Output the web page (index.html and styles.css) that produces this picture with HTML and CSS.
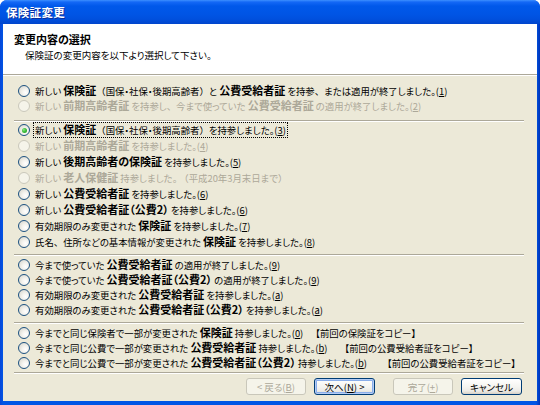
FILE: index.html
```html
<!DOCTYPE html>
<html lang="ja">
<head>
<meta charset="utf-8">
<title>保険証変更</title>
<link rel="stylesheet" href="styles.css">
</head>
<body>
<div class="window">
  <div class="titlebar"><span class="title">保険証変更</span></div>
  <div class="frame">
    <div class="header">
      <div class="h-title">変更内容の選択</div>
      <div class="h-sub">保険証の変更内容を以下より選択して下さい。</div>
    </div>
    <div class="content">
      <div class="group g1">
        <div class="row"><span class="radio"></span><span class="txt">新しい <b>保険証</b><span class="fw">（</span>国保・社保・後期高齢者<span class="fw">）</span>と <b>公費受給者証</b> を持参<span class="fw">、</span>または適用が終了しました。(<u>1</u>)</span></div>
        <div class="row dis"><span class="radio"></span><span class="txt">新しい <b>前期高齢者証</b> を持参し<span class="fw">、</span>今まで使っていた <b>公費受給者証</b> の適用が終了しました。(<u>2</u>)</span></div>
      </div>
      <div class="sep s1"></div>
      <div class="group g2">
        <div class="row"><span class="radio on"></span><span class="txt focus">新しい <b>保険証</b><span class="fw">（</span>国保・社保・後期高齢者<span class="fw">）</span>を持参しました。(<u>3</u>)</span></div>
        <div class="row dis"><span class="radio"></span><span class="txt">新しい <b>前期高齢者証</b> を持参しました。(<u>4</u>)</span></div>
        <div class="row"><span class="radio"></span><span class="txt">新しい <b>後期高齢者の保険証</b> を持参しました。(<u>5</u>)</span></div>
        <div class="row dis"><span class="radio"></span><span class="txt">新しい <b>老人保健証</b> 持参しました。 <span class="fw">（</span>平成20年3月末日まで<span class="fw">）</span></span></div>
        <div class="row"><span class="radio"></span><span class="txt">新しい <b>公費受給者証</b> を持参しました。(<u>6</u>)</span></div>
        <div class="row"><span class="radio"></span><span class="txt">新しい <b>公費受給者証（公費2）</b> を持参しました。(<u>6</u>)</span></div>
        <div class="row"><span class="radio"></span><span class="txt">有効期限のみ変更された <b>保険証</b> を持参しました。(<u>7</u>)</span></div>
        <div class="row"><span class="radio"></span><span class="txt">氏名<span class="fw">、</span>住所などの基本情報が変更された <b>保険証</b> を持参しました。(<u>8</u>)</span></div>
      </div>
      <div class="sep s2"></div>
      <div class="group g3">
        <div class="row"><span class="radio"></span><span class="txt">今まで使っていた <b>公費受給者証</b> の適用が終了しました。(<u>9</u>)</span></div>
        <div class="row"><span class="radio"></span><span class="txt">今まで使っていた <b>公費受給者証（公費2）</b> の適用が終了しました。(<u>9</u>)</span></div>
        <div class="row"><span class="radio"></span><span class="txt">有効期限のみ変更された <b>公費受給者証</b> を持参しました。(<u>a</u>)</span></div>
        <div class="row"><span class="radio"></span><span class="txt">有効期限のみ変更された <b>公費受給者証（公費2）</b> を持参しました。(<u>a</u>)</span></div>
      </div>
      <div class="sep s3"></div>
      <div class="group g4">
        <div class="row"><span class="radio"></span><span class="txt">今までと同じ保険者で一部が変更された <b>保険証</b> 持参しました。(<u>0</u>)</span><span class="copy c1">【前回の保険証をコピー】</span></div>
        <div class="row"><span class="radio"></span><span class="txt">今までと同じ公費で一部が変更された <b>公費受給者証</b> 持参しました。(<u>b</u>)</span><span class="copy c2">【前回の公費受給者証をコピー】</span></div>
        <div class="row"><span class="radio"></span><span class="txt">今までと同じ公費で一部が変更された <b>公費受給者証（公費2）</b> 持参しました。(<u>b</u>)</span><span class="copy c3">【前回の公費受給者証をコピー】</span></div>
      </div>
      <div class="sep s4"></div>
    </div>
    <div class="footer">
      <button class="btn disabled back">&lt; 戻る(<u>B</u>)</button>
      <button class="btn default next">次へ(<u>N</u>) &gt;</button>
      <button class="btn disabled finish">完了(<u>+</u>)</button>
      <button class="btn cancel">キャンセル</button>
    </div>
  </div>
</div>
</body>
</html>
```

FILE: styles.css
```css
* { box-sizing: border-box; }
html, body { margin: 0; padding: 0; background: #ffffff; }
body {
  font-family: "Noto Sans CJK JP", "Noto Sans", sans-serif;
  font-size: 9.4px;
  color: #000;
  font-feature-settings: "palt";
}
.window {
  width: 540px;
  height: 405px;
  display: flex;
  flex-direction: column;
  background: linear-gradient(90deg, #0846D8 0, #0055E5 3px, #0055E5 536px, #0033B8 540px);
  border-radius: 7px 7px 0 0;
  overflow: hidden;
}
.titlebar {
  height: 24px;
  flex: none;
  background: linear-gradient(#3D8FFF 0, #1468F6 2px, #0058EA 6px, #0055E5 14px, #0050DE 19px, #0045CC 24px);
  display: flex;
  align-items: center;
  padding-left: 6px;
}
.title {
  color: #fff;
  font-weight: bold;
  font-size: 11.5px;
  letter-spacing: 0.3px;
  text-shadow: 1px 1px 0 #0A2C9A;
}
.frame {
  flex: 1;
  margin: 0 3px 4px 3px;
  background: #ECE9D8;
  display: flex;
  flex-direction: column;
}
.header {
  height: 51px;
  flex: none;
  background: #fff;
  border-bottom: 1px solid #ACA899;
  padding: 8px 0 0 11px;
}
.h-title {
  font-weight: bold;
  font-size: 11px;
  line-height: 14px;
}
.h-sub {
  margin-top: 2px;
  padding-left: 11px;
  line-height: 14px;
  font-size: 9.5px;
}
.content {
  border-top: 1px solid #fff;
  padding-top: 7px;
}
.row {
  display: flex;
  align-items: center;
  height: 16px;
  padding-left: 15px;
  white-space: nowrap;
}
.g1 .row, .g3 .row, .g4 .row { height: 15px; }
.txt {
  margin-left: 3px;
  line-height: 13px;
  padding: 0 1px;
  border: 1px solid transparent;
}
.txt b { font-weight: bold; font-size: 11px; }
.txt u { text-decoration: underline; }
.fw { font-feature-settings: normal; }
.txt.focus { border: 1px dotted #000; }
.copy { margin-left: 11px; }
.c1 { margin-left: 10px; }
.c2 { margin-left: 15px; }
.c3 { margin-left: 18px; }
.dis { color: #ACA899; }
.radio {
  width: 12px;
  height: 12px;
  flex: none;
  border-radius: 50%;
  border: 1px solid #1C5180;
  background: radial-gradient(circle at 65% 65%, #FFFFFF 0, #F4F3EE 35%, #DCDBD3 80%, #CFCEC6 100%);
  position: relative;
}
.dis .radio {
  border-color: #CAC8BB;
  background: #F5F4EA;
}
.radio.on::after {
  content: "";
  position: absolute;
  left: 2.5px;
  top: 2.5px;
  width: 5px;
  height: 5px;
  border-radius: 50%;
  background: radial-gradient(circle at 35% 35%, #8CE88A 0, #3FBF3D 45%, #1E9A1C 100%);
}
.sep {
  height: 2px;
  border-top: 1px solid #ACA899;
  border-bottom: 1px solid #fff;
  margin: 0 13px 0 11px;
}
.s1 { margin-top: 7px; }
.s2 { margin-top: 4px; margin-bottom: 1px; }
.s3 { margin-top: 5px; margin-bottom: 1px; }
.s4 { margin-top: 2px; }
.footer {
  flex: 1;
  display: flex;
  justify-content: flex-end;
  align-items: flex-start;
  padding: 4px 15px 0 0;
}
.btn {
  height: 17px;
  width: 60px;
  padding: 0;
  font-family: "Noto Sans CJK JP", "Noto Sans", sans-serif;
  font-size: 9.5px;
  line-height: 14px;
  font-feature-settings: "palt";
  color: #000;
  border: 1px solid #003C74;
  border-radius: 3px;
  background: linear-gradient(#FFFFFF 0, #F5F5F1 50%, #ECEBE6 80%, #D6D0C5 100%);
}
.btn.next { margin-left: 8px; width: 61px; }
.btn.finish { margin-left: 18px; }
.btn.cancel { margin-left: 8px; width: 61px; }
.btn.default {
  box-shadow: inset 0 0 0 1px #B5CDF5, inset 0 0 0 2px #8AAEEA;
}
.btn.disabled {
  color: #ACA899;
  border-color: #C9C7BA;
  background: #F5F4EA;
}
```
